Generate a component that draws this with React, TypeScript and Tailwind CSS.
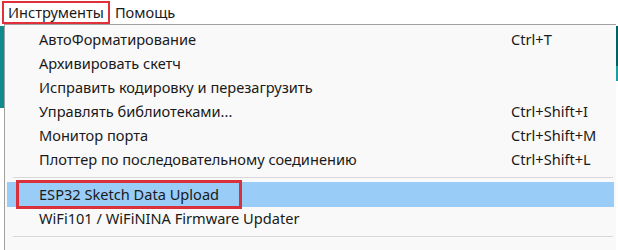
const items: { label: string; shortcut?: string }[] = [
  { label: "АвтоФорматирование", shortcut: "Ctrl+T" },
  { label: "Архивировать скетч" },
  { label: "Исправить кодировку и перезагрузить" },
  { label: "Управлять библиотеками...", shortcut: "Ctrl+Shift+I" },
  { label: "Монитор порта", shortcut: "Ctrl+Shift+M" },
  { label: "Плоттер по последовательному соединению", shortcut: "Ctrl+Shift+L" },
];

function Row({ label, shortcut }: { label: string; shortcut?: string }) {
  return (
    <div className="h-[24px] flex items-center pl-[34px]">
      <span className="w-[472px] shrink-0">{label}</span>
      <span>{shortcut}</span>
    </div>
  );
}

function Separator() {
  return (
    <div className="h-[10px] flex items-center pl-[8px] pr-[3px]">
      <div className="h-px w-full bg-[#d8d8d8]" />
    </div>
  );
}

export default function App() {
  return (
    <div
      className="w-[618px] h-[250px] bg-white overflow-hidden text-[14.6px] text-[#1a1a1a] flex flex-col"
      style={{ fontFamily: '"Noto Sans", "Open Sans", sans-serif' }}
    >
      <div className="h-[24px] flex items-center shrink-0 pt-[1px]">
        <span className="ml-[2px] h-[23px] px-[4px] flex items-center border-2 border-[#e0303a]">
          Инструменты
        </span>
        <span className="ml-[5px]">Помощь</span>
      </div>

      <div className="flex flex-1">
        <div className="w-[4px] shrink-0 flex flex-col">
          <div className="h-[82px] bg-[#0f8a8f] mt-[2px]" />
        </div>

        <div className="flex-1 bg-[#f9f9f9] border-l border-t border-[#a0a0a0] pt-[3px]">
          {items.map((it) => (
            <Row key={it.label} label={it.label} shortcut={it.shortcut} />
          ))}
          <Separator />
          <div className="relative h-[25px] ml-[2px] mr-[2px] bg-[#99cdf7] flex items-center pl-[32px]">
            <span className="absolute left-[9px] top-[-2px] w-[226px] h-[29px] border-[3px] border-[#d9313b]" />
            ESP32 Sketch Data Upload
          </div>
          <Row label="WiFi101 / WiFiNINA Firmware Updater" />
          <Separator />
        </div>

        <div className="w-[2px] shrink-0 flex flex-col pt-[2px]">
          <div className="h-[40px] bg-[#006266]" />
          <div className="h-[15px] bg-[#17a0a4]" />
        </div>
      </div>
    </div>
  );
}
